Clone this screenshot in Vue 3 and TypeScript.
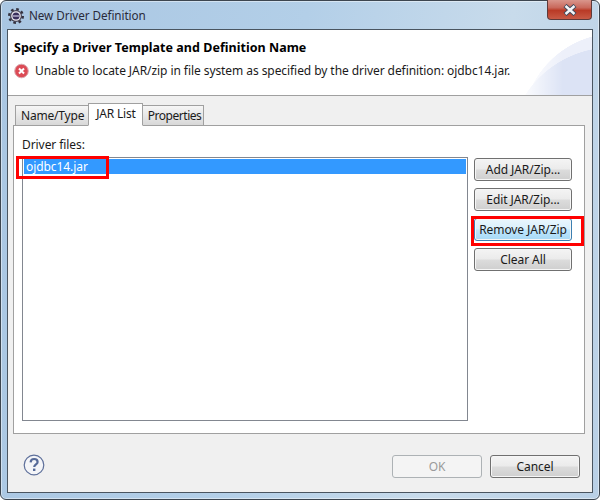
<script setup lang="ts">
const sideButtons = ['Add JAR/Zip...', 'Edit JAR/Zip...', 'Remove JAR/Zip', 'Clear All']
</script>

<template>
  <div class="window">
    <div class="titlebar">
      <svg class="app-icon" width="16" height="16" viewBox="0 0 16 16">
        <circle cx="8" cy="8" r="6.7" fill="none" stroke="#35323f" stroke-width="2.6" stroke-dasharray="2.6 2.66" />
        <circle cx="8" cy="8" r="6" fill="#4a4656" />
        <circle cx="8" cy="8" r="4.8" fill="#eceaf0" />
        <circle cx="8" cy="8" r="3.5" fill="#3a2f5c" />
        <rect x="4.6" y="7.2" width="6.8" height="1.6" fill="#a8a2c0" />
      </svg>
      <span class="title">New Driver Definition</span>
      <div class="close">
        <svg width="16" height="12" viewBox="0 0 16 12">
          <path d="M3 1.5 L13 10.5 M13 1.5 L3 10.5" stroke="#3f4a5c" stroke-width="4.4" />
          <path d="M3.5 2 L12.5 10 M12.5 2 L3.5 10" stroke="#f4f6f8" stroke-width="2.4" />
        </svg>
      </div>
    </div>
    <div class="client">
      <header class="banner">
        <h1>Specify a Driver Template and Definition Name</h1>
        <div class="message">
          <svg width="15" height="16" viewBox="0 0 15 16">
            <circle cx="7.5" cy="8" r="6.8" fill="#dc4a55" stroke="#d9aab0" stroke-width="1" />
            <path d="M5 5.5 L10 10.5 M10 5.5 L5 10.5" stroke="#fff" stroke-width="2" />
          </svg>
          <span>Unable to locate JAR/zip in file system as specified by the driver definition: ojdbc14.jar.</span>
        </div>
      </header>
      <main class="body">
        <div class="tabs">
          <div class="tab first">Name/Type</div>
          <div class="tab active">JAR List</div>
          <div class="tab last">Properties</div>
        </div>
        <section class="panel">
          <div class="label">Driver files:</div>
          <div class="panel-row">
            <div class="list">
              <div class="list-item">ojdbc14.jar</div>
              <div class="mark mark-file"></div>
            </div>
            <div class="side">
              <button
                v-for="b in sideButtons"
                :key="b"
                class="btn"
                :class="{ hot: b.startsWith('Remove') }"
              >{{ b }}</button>
              <div class="mark mark-remove"></div>
            </div>
          </div>
        </section>
      </main>
      <footer class="footer">
        <svg class="help" width="22" height="22" viewBox="0 0 22 22">
          <circle cx="11" cy="11" r="9.8" fill="#f4f5f8" stroke="#5d6f9a" stroke-width="1.2" />
          <path d="M7.6 8.4 C7.8 5.9 9.4 5 11.1 5 C13 5 14.6 6.2 14.6 8 C14.6 10.3 11.2 10.4 11.2 13" fill="none" stroke="#566a98" stroke-width="2.2" />
          <rect x="10" y="14.6" width="2.4" height="2.4" fill="#566a98" />
        </svg>
        <div class="actions">
          <button class="btn wide" disabled>OK</button>
          <button class="btn wide">Cancel</button>
        </div>
      </footer>
    </div>
  </div>
</template>

<style>
html, body { margin: 0; padding: 0; }
</style>

<style scoped>
.window {
  box-sizing: border-box;
  width: 600px;
  height: 500px;
  display: flex;
  flex-direction: column;
  font-family: "Noto Sans", "Open Sans", sans-serif;
  font-size: 12px;
  letter-spacing: -0.07px;
  color: #1a1a1a;
  background: linear-gradient(100deg, #a9c6e2 0%, #b3cfe8 45%, #c8dbeb 75%, #b9d0e6 100%);
  border: 1px solid #3d4650;
  border-radius: 6px;
  padding: 0 6px 6px;
  box-shadow: inset 0 0 0 1px rgba(255, 255, 255, 0.45);
}
.titlebar {
  height: 28px;
  flex: none;
  display: flex;
  align-items: center;
  position: relative;
}
.app-icon { margin: 2px 0 0 1px; }
.title { margin-left: 5px; color: #2a2a3a; font-size: 11.7px; }
.close {
  position: absolute;
  right: 1px;
  top: -1px;
  width: 45px;
  height: 20px;
  box-sizing: border-box;
  border: 1px solid #5e3a3a;
  border-top: 0;
  border-radius: 0 0 4px 4px;
  background: linear-gradient(#d9968c 0%, #c9695c 40%, #b93a26 55%, #c85a45 100%);
  display: flex;
  align-items: center;
  justify-content: center;
}
.client {
  flex: 1;
  min-height: 0;
  display: flex;
  flex-direction: column;
  background: #f0f0f0;
  border: 1px solid #4a5560;
}
.banner {
  flex: none;
  height: 66px;
  box-sizing: border-box;
  padding: 9px 6px 0;
  background:
    linear-gradient(90deg, #fff 512px, rgba(255, 255, 255, 0) 555px),
    radial-gradient(circle 105px at 605px 122px, #dce3f5 99.5%, transparent 100%),
    radial-gradient(circle 95px at 609px 98px, #edf0fa 99.5%, transparent 100%),
    #fff;
  border-bottom: 1px solid #a0a0a0;
}
.banner h1 {
  margin: 0;
  font-size: 12.5px;
  letter-spacing: 0.03px;
  line-height: 17px;
  font-weight: 700;
  color: #000;
}
.message {
  display: flex;
  align-items: center;
  gap: 6px;
  margin-top: 7px;
  line-height: 16px;
}
.body {
  flex: none;
  display: flex;
  flex-direction: column;
  padding: 9px 7px 0 5px;
}
.tabs {
  flex: none;
  display: flex;
  height: 21px;
  padding-left: 2px;
  align-items: flex-end;
  position: relative;
  z-index: 1;
  margin-bottom: -1px;
}
.tab {
  box-sizing: border-box;
  height: 21px;
  padding: 0 2px 0 4px;
  line-height: 19px;
  letter-spacing: -0.2px;
  background: linear-gradient(#f6f6f6, #d8d8d8);
  border: 1px solid #a0a0a0;
  margin-right: -1px;
}
.tab.first { padding: 0 4px 0 5px; }
.tab.last { padding: 0 2px 0 5px; letter-spacing: -0.45px; }
.tab.active {
  height: 23px;
  line-height: 20px;
  background: #fff;
  border-bottom-color: #fff;
  position: relative;
  z-index: 2;
  padding: 0 6px 0 7px;
}
.panel {
  height: 309px;
  flex: none;
  box-sizing: border-box;
  background: #fff;
  border: 1px solid #a0a0a0;
  padding: 11px 12px 12px 8px;
  display: flex;
  flex-direction: column;
}
.label { line-height: 16px; height: 20px; flex: none; }
.panel-row {
  flex: 1;
  min-height: 0;
  display: flex;
  gap: 6px;
}
.list {
  position: relative;
  width: 446px;
  box-sizing: border-box;
  border: 1px solid #828790;
  padding: 1px;
}
.list-item {
  height: 15px;
  line-height: 15px;
  padding-left: 2px;
  background: #3399ff;
  color: #fff;
}
.side {
  position: relative;
  display: flex;
  flex-direction: column;
  gap: 7px;
  padding-top: 1px;
}
.btn {
  box-sizing: border-box;
  width: 98px;
  height: 23px;
  padding: 0;
  font: inherit;
  letter-spacing: inherit;
  color: #1a1a1a;
  border: 1px solid #707070;
  border-radius: 3px;
  background: linear-gradient(#f4f4f4 0%, #ebebeb 48%, #dcdcdc 52%, #cfcfcf 100%);
  box-shadow: inset 0 0 0 1px #f6f6f6;
}
.btn.hot {
  border-color: #3c7fb1;
  background: linear-gradient(#eaf6fd 0%, #d9f0fc 48%, #bee6fd 52%, #a7d9f5 100%);
}
.btn.wide { width: 90px; }
.btn:disabled {
  color: #9a9a9a;
  border-color: #adb2b5;
  background: #f4f4f4;
  box-shadow: none;
}
.mark {
  position: absolute;
  box-sizing: border-box;
  border: 3px solid #ff0000;
  pointer-events: none;
}
.mark-file { left: -7px; top: -2px; width: 93px; height: 23px; }
.mark-remove { left: -3px; top: 59px; width: 113px; height: 30px; }
.footer {
  flex: 1;
  min-height: 0;
  display: flex;
  align-items: flex-start;
  justify-content: space-between;
  padding: 20px 12px 0 15px;
}
.actions { display: flex; gap: 8px; margin-top: 1px; }
</style>
